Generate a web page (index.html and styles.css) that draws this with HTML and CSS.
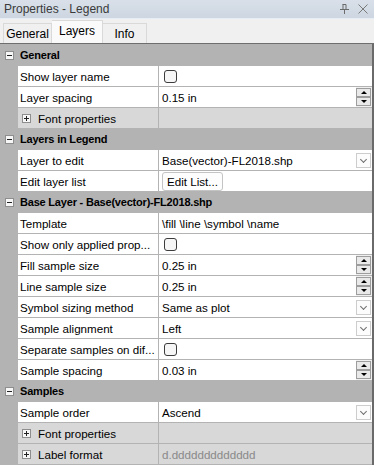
FILE: index.html
```html
<!DOCTYPE html>
<html>
<head>
<meta charset="utf-8">
<link rel="stylesheet" href="styles.css">
</head>
<body>
<div class="window">
  <div class="titlebar">
    <span class="title">Properties - Legend</span>
    <span class="tb-icons">
      <svg class="pin" width="9" height="10" viewBox="0 0 9 10"><path d="M2.5 0.5h3.5v5M3 0.5v5M0 5.5h9M4.5 6v4" stroke="#6b6b6b" fill="none"/></svg>
      <svg class="close" width="10" height="10" viewBox="0 0 10 10"><path d="M0.5 0.5l9 9M9.5 0.5l-9 9" stroke="#7a7a7a" fill="none"/></svg>
    </span>
  </div>
  <div class="tabs">
    <div class="tab tab-general">General</div>
    <div class="tab tab-layers active">Layers</div>
    <div class="tab tab-info">Info</div>
  </div>
  <div class="grid">
    <div class="head"><span class="tog minus"></span>General</div>
    <div class="row"><div class="name">Show layer name</div><div class="val"><span class="check"></span></div></div>
    <div class="row"><div class="name">Layer spacing</div><div class="val">0.15 in<span class="spin"><span class="sb up"></span><span class="sb down"></span></span></div></div>
    <div class="row group"><div class="name"><span class="tog plus"></span>Font properties</div><div class="val"></div></div>

    <div class="head"><span class="tog minus"></span>Layers in Legend</div>
    <div class="row"><div class="name">Layer to edit</div><div class="val">Base(vector)-FL2018.shp<span class="drop"></span></div></div>
    <div class="row"><div class="name">Edit layer list</div><div class="val"><span class="btn">Edit List...</span></div></div>

    <div class="head"><span class="tog minus"></span>Base Layer - Base(vector)-FL2018.shp</div>
    <div class="row"><div class="name">Template</div><div class="val">\fill \line \symbol \name</div></div>
    <div class="row"><div class="name">Show only applied prop...</div><div class="val"><span class="check"></span></div></div>
    <div class="row"><div class="name">Fill sample size</div><div class="val">0.25 in<span class="spin"><span class="sb up"></span><span class="sb down"></span></span></div></div>
    <div class="row"><div class="name">Line sample size</div><div class="val">0.25 in<span class="spin"><span class="sb up"></span><span class="sb down"></span></span></div></div>
    <div class="row"><div class="name">Symbol sizing method</div><div class="val">Same as plot<span class="drop"></span></div></div>
    <div class="row"><div class="name">Sample alignment</div><div class="val">Left<span class="drop"></span></div></div>
    <div class="row"><div class="name">Separate samples on dif...</div><div class="val"><span class="check"></span></div></div>
    <div class="row"><div class="name">Sample spacing</div><div class="val">0.03 in<span class="spin"><span class="sb up"></span><span class="sb down"></span></span></div></div>

    <div class="head"><span class="tog minus"></span>Samples</div>
    <div class="row"><div class="name">Sample order</div><div class="val">Ascend<span class="drop"></span></div></div>
    <div class="row group"><div class="name"><span class="tog plus"></span>Font properties</div><div class="val"></div></div>
    <div class="row group"><div class="name"><span class="tog plus"></span>Label format</div><div class="val muted">d.ddddddddddddd</div></div>
  </div>
</div>
</body>
</html>
```
FILE: styles.css
```css
* { box-sizing: border-box; }
body {
  margin: 0;
  font-family: "Liberation Sans", Arial, sans-serif;
  font-size: 11.6px;
  color: #000;
  background: #f0f0f0;
}
.window {
  width: 374px;
  height: 465px;
  overflow: hidden;
  display: flex;
  flex-direction: column;
}
.titlebar {
  height: 19px;
  flex: none;
  display: flex;
  align-items: center;
  padding: 0 6px 1px 4px;
  background: linear-gradient(#d9e0e9, #cdd6e1);
  border-bottom: 1px solid #e7edf4;
  color: #3a3a3a;
  font-size: 12px;
}
.title { flex: 1; }
.tb-icons { display: flex; align-items: center; gap: 9px; }
.tabs {
  height: 25px;
  flex: none;
  display: flex;
  align-items: flex-end;
  padding-left: 3px;
  background: #f0f0f0;
  border-bottom: 1px solid #6e6e6e;
  font-size: 12px;
}
.tab {
  height: 20px;
  border: 1px solid #d9d9d9;
  border-bottom: none;
  display: flex;
  align-items: center;
  justify-content: center;
  background: #f0f0f0;
}
.tab + .tab { border-left: none; }
.tab.active {
  height: 23px;
  background: #fafafa;
  padding-bottom: 3px;
}
.tab-general { width: 49px; }
.tab-layers { width: 51px; }
.tab-info { width: 44px; }
.grid {
  flex: 1;
  display: flex;
  flex-direction: column;
  gap: 1px;
  padding-top: 1px;
  background: #b3b3b3;
  border-right: 2px solid #6a6a6a;
}
.head {
  height: 20px;
  flex: none;
  display: flex;
  align-items: center;
  font-weight: bold;
  font-size: 11px;
  letter-spacing: -0.2px;
  padding-left: 5px;
}
.head .tog { margin-right: 6px; }
.tog {
  width: 9px;
  height: 9px;
  flex: none;
  position: relative;
  border: 1px solid #8e8e8e;
  background: #f7f7f7;
}
.tog::before {
  content: "";
  position: absolute;
  left: 1px;
  top: 3px;
  width: 5px;
  height: 1px;
  background: #222;
}
.tog.plus::after {
  content: "";
  position: absolute;
  left: 3px;
  top: 1px;
  width: 1px;
  height: 5px;
  background: #222;
}
.row {
  height: 20px;
  flex: none;
  margin-left: 18px;
  display: grid;
  grid-template-columns: 140px 1fr;
  gap: 1px;
}
.name, .val {
  background: #fff;
  display: flex;
  align-items: center;
  white-space: nowrap;
  overflow: hidden;
}
.name { padding-left: 2px; }
.val { padding-left: 3px; position: relative; }
.group .name, .group .val { background: #d8d8d8; }
.group .name .tog { margin: 0 7px 0 2px; }
.muted { color: #8a8a8a; }
.check {
  width: 13px;
  height: 13px;
  margin-left: 2px;
  border: 1px solid #3c3c3c;
  border-radius: 3px;
  background: #f6f6f6;
}
.spin {
  margin-left: auto;
  margin-right: 0;
  width: 16px;
  height: 20px;
  display: flex;
  flex-direction: column;
  justify-content: center;
  gap: 0;
  padding: 1px 1px 1px 0;
  background: #f0f0f0;
}
.sb {
  height: 9px;
  border: 1px solid #9d9d9d;
  background: #e9e9e9;
  display: flex;
  align-items: center;
  justify-content: center;
}
.sb::after {
  content: "";
  width: 0;
  height: 0;
  border-left: 3px solid transparent;
  border-right: 3px solid transparent;
}
.sb.up::after { border-bottom: 3px solid #000; }
.sb.down::after { border-top: 3px solid #000; }
.drop {
  margin-left: auto;
  margin-right: 1px;
  width: 15px;
  height: 15px;
  border: 1px solid #cdcdcd;
  background: #fcfcfc;
  position: relative;
}
.drop::after {
  content: "";
  position: absolute;
  left: 4px;
  top: 3px;
  width: 4px;
  height: 4px;
  border-right: 1px solid #6e6e6e;
  border-bottom: 1px solid #6e6e6e;
  transform: rotate(45deg);
}
.btn {
  height: 19px;
  margin-top: 1px;
  padding: 0 4px;
  display: flex;
  align-items: center;
  border: 1px solid #c4c4c4;
  border-radius: 3px;
  background: #fdfdfd;
}
```
